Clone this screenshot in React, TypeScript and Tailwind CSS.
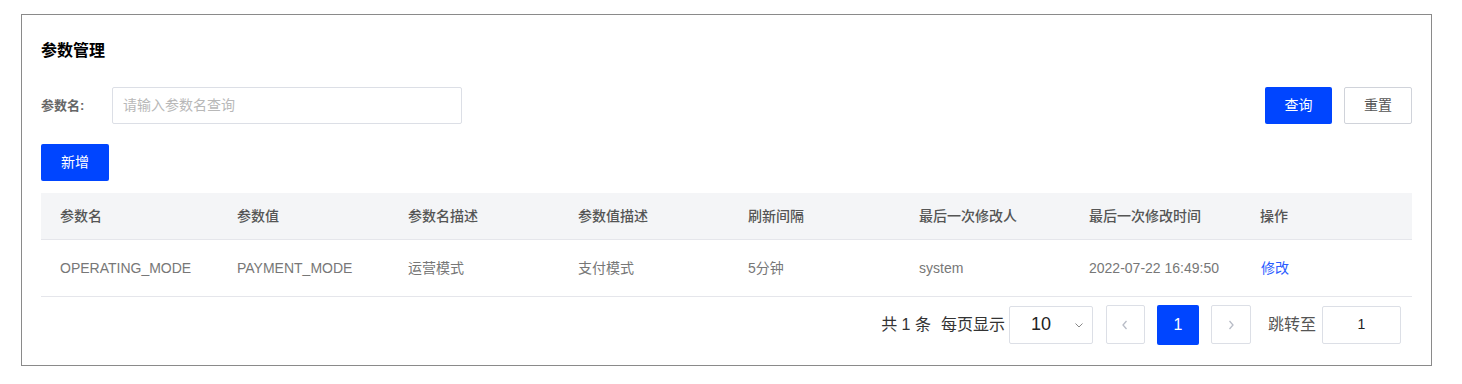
import React from "react";

const font = { fontFamily: '"Liberation Sans", "Noto Sans CJK SC", sans-serif' };

const headers = ["参数名", "参数值", "参数名描述", "参数值描述", "刷新间隔", "最后一次修改人", "最后一次修改时间", "操作"];
const row = ["OPERATING_MODE", "PAYMENT_MODE", "运营模式", "支付模式", "5分钟", "system", "2022-07-22 16:49:50"];

const cols = "grid grid-cols-[177px_171px_170px_170px_171px_170px_171px_1fr]";

export default function App() {
  return (
    <div className="w-[1462px] h-[384px] bg-white pt-[14px] pl-[21px]" style={font}>
      <div className="w-[1411px] h-[352px] border border-[#8a8a8a] bg-white px-[19px] pt-[24px]">
        <div className="text-[16px] leading-[24px] font-bold text-black">参数管理</div>

        <div className="mt-[24px] flex items-center h-[37px]">
          <div className="text-[13px] font-bold text-[#666] w-[71px]">参数名:</div>
          <div className="w-[350px] h-[37px] border border-[#dcdfe6] rounded-[2px] flex items-center pl-[10px] text-[14px] text-[#b8b8b8]">
            请输入参数名查询
          </div>
          <div className="flex-1" />
          <button className="w-[67px] h-[37px] rounded-[2px] bg-[#0045ff] text-white text-[14px]">查询</button>
          <button className="ml-[12px] w-[68px] h-[37px] rounded-[2px] border border-[#d0d3da] bg-white text-[#555] text-[14px]">重置</button>
        </div>

        <button className="mt-[20px] w-[68px] h-[37px] rounded-[2px] bg-[#0045ff] text-white text-[14px] block">新增</button>

        <div className="mt-[12px]">
          <div className={`${cols} h-[47px] bg-[#f4f5f7] border-b border-[#e5e6eb] items-center`}>
            {headers.map((h) => (
              <div key={h} className="pl-[19px] text-[14px] font-medium text-[#555]">{h}</div>
            ))}
          </div>
          <div className={`${cols} h-[57px] border-b border-[#e5e6eb] items-center`}>
            {row.map((c, i) => (
              <div key={i} className="pl-[19px] text-[14px] text-[#777]">{c}</div>
            ))}
            <div className="pl-[20px] text-[14px] text-[#2a5cff]">修改</div>
          </div>
        </div>

        <div className="mt-[8px] flex items-center justify-end pr-[11px] h-[39px]">
          <span className="text-[16px] text-[#333]">共 1 条</span>
          <span className="ml-[10px] text-[16px] text-[#333]">每页显示</span>
          <div className="ml-[4px] w-[84px] h-[38px] border border-[#dcdfe6] rounded-[2px] flex items-center justify-between pl-[21px] pr-[7px]">
            <span className="text-[18px] text-[#222]">10</span>
            <svg width="12" height="12" viewBox="0 0 12 12" fill="none" stroke="#888" strokeWidth="1">
              <path d="M2.5 4.5 L6 8 L9.5 4.5" />
            </svg>
          </div>
          <div className="ml-[13px] w-[39px] h-[39px] border border-[#dcdfe6] rounded-[2px] flex items-center justify-center">
            <svg width="12" height="14" viewBox="0 0 12 14" fill="none" stroke="#b8bcc6" strokeWidth="1.3">
              <path d="M7.5 3 L4 7 L7.5 11" />
            </svg>
          </div>
          <div className="ml-[12px] w-[42px] h-[40px] rounded-[2px] bg-[#0045ff] flex items-center justify-center text-white text-[16px]">1</div>
          <div className="ml-[12px] w-[40px] h-[39px] border border-[#dcdfe6] rounded-[2px] flex items-center justify-center">
            <svg width="12" height="14" viewBox="0 0 12 14" fill="none" stroke="#b8bcc6" strokeWidth="1.3">
              <path d="M4.5 3 L8 7 L4.5 11" />
            </svg>
          </div>
          <span className="ml-[17px] text-[16px] text-[#555]">跳转至</span>
          <div className="ml-[6px] w-[79px] h-[38px] border border-[#dcdfe6] rounded-[2px] flex items-center justify-center text-[14px] text-[#222]">1</div>
        </div>
      </div>
    </div>
  );
}
